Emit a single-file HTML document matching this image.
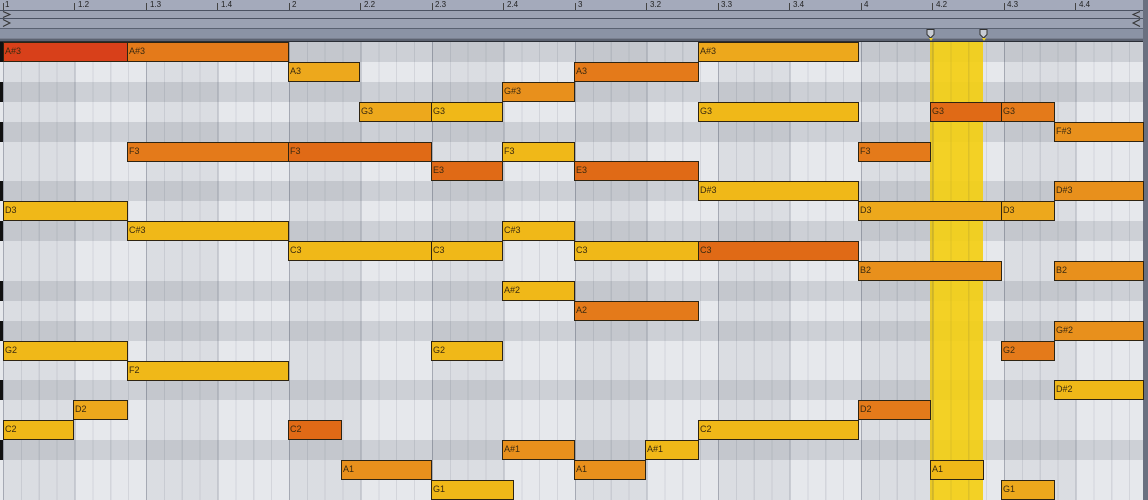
<!DOCTYPE html>
<html><head><meta charset="utf-8"><style>
*{margin:0;padding:0;box-sizing:border-box}
body{width:1148px;height:500px;overflow:hidden;background:#e6e8ec;position:relative;font-family:"Liberation Sans",sans-serif}
.r{position:absolute;left:0;width:1143px;height:20px;background:#e6e8ec}
.d{background:#cdd0d6}
.d::before{content:"";position:absolute;left:0;top:0;width:3px;height:100%;background:#111}
#ov{position:absolute;left:0;top:42px;width:1143px;height:458px;
background:
repeating-linear-gradient(90deg,rgba(40,50,70,.10) 0 1px,transparent 1px 17.875px),
repeating-linear-gradient(90deg,rgba(40,50,70,.22) 0 1px,transparent 1px 71.5px),
repeating-linear-gradient(90deg,rgba(30,40,60,.055) 0 71.5px,transparent 71.5px 143px);
background-position:3px 0,3px 0,3px 0}
#hl{position:absolute;left:930px;top:42px;width:53px;height:458px;background:rgba(244,206,16,.9)}
.n{position:absolute;height:20px;border:1.5px solid #2e2412;font-size:9px;line-height:17px;padding-left:1px;color:#3a2a10;white-space:nowrap;overflow:hidden}
.y{background:#f0b818}.o{background:#e8901c}.oo{background:#e47a1a}.do{background:#e06a16}.rd{background:#d8401a}.yo{background:#eda81c}
#ruler{position:absolute;left:0;top:0;width:1148px;height:42px;background:#a4aabb}
.s{position:absolute;left:0;width:1143px}
.lab{position:absolute;top:0;font-size:8px;color:#222;line-height:10px}
.tk{position:absolute;top:3px;width:1px;height:7px;background:#444}
</style></head><body>
<div class="r d" style="top:42px"></div>
<div class="r" style="top:62px"></div>
<div class="r d" style="top:82px"></div>
<div class="r" style="top:102px"></div>
<div class="r d" style="top:122px"></div>
<div class="r" style="top:142px"></div>
<div class="r" style="top:161px"></div>
<div class="r d" style="top:181px"></div>
<div class="r" style="top:201px"></div>
<div class="r d" style="top:221px"></div>
<div class="r" style="top:241px"></div>
<div class="r" style="top:261px"></div>
<div class="r d" style="top:281px"></div>
<div class="r" style="top:301px"></div>
<div class="r d" style="top:321px"></div>
<div class="r" style="top:341px"></div>
<div class="r" style="top:361px"></div>
<div class="r d" style="top:380px"></div>
<div class="r" style="top:400px"></div>
<div class="r" style="top:420px"></div>
<div class="r d" style="top:440px"></div>
<div class="r" style="top:460px"></div>
<div class="r" style="top:480px"></div>
<div id="hl"></div>
<div id="ov"></div>
<div style="position:absolute;left:1143px;top:0;width:5px;height:500px;background:#6a7080"></div>

<div class="n rd" style="left:3px;width:125px;top:42px">A#3</div>
<div class="n oo" style="left:127px;width:162px;top:42px">A#3</div>
<div class="n yo" style="left:698px;width:161px;top:42px">A#3</div>
<div class="n yo" style="left:288px;width:72px;top:62px">A3</div>
<div class="n oo" style="left:574px;width:125px;top:62px">A3</div>
<div class="n o" style="left:502px;width:73px;top:82px">G#3</div>
<div class="n yo" style="left:359px;width:73px;top:102px">G3</div>
<div class="n y" style="left:431px;width:72px;top:102px">G3</div>
<div class="n y" style="left:698px;width:161px;top:102px">G3</div>
<div class="n do" style="left:930px;width:72px;top:102px">G3</div>
<div class="n oo" style="left:1001px;width:54px;top:102px">G3</div>
<div class="n o" style="left:1054px;width:90px;top:122px">F#3</div>
<div class="n oo" style="left:127px;width:162px;top:142px">F3</div>
<div class="n do" style="left:288px;width:144px;top:142px">F3</div>
<div class="n y" style="left:502px;width:73px;top:142px">F3</div>
<div class="n oo" style="left:858px;width:73px;top:142px">F3</div>
<div class="n do" style="left:431px;width:72px;top:161px">E3</div>
<div class="n do" style="left:574px;width:125px;top:161px">E3</div>
<div class="n y" style="left:698px;width:161px;top:181px">D#3</div>
<div class="n o" style="left:1054px;width:90px;top:181px">D#3</div>
<div class="n y" style="left:3px;width:125px;top:201px">D3</div>
<div class="n yo" style="left:858px;width:144px;top:201px">D3</div>
<div class="n yo" style="left:1001px;width:54px;top:201px">D3</div>
<div class="n y" style="left:127px;width:162px;top:221px">C#3</div>
<div class="n y" style="left:502px;width:73px;top:221px">C#3</div>
<div class="n y" style="left:288px;width:144px;top:241px">C3</div>
<div class="n y" style="left:431px;width:72px;top:241px">C3</div>
<div class="n y" style="left:574px;width:125px;top:241px">C3</div>
<div class="n do" style="left:698px;width:161px;top:241px">C3</div>
<div class="n o" style="left:858px;width:144px;top:261px">B2</div>
<div class="n o" style="left:1054px;width:90px;top:261px">B2</div>
<div class="n y" style="left:502px;width:73px;top:281px">A#2</div>
<div class="n oo" style="left:574px;width:125px;top:301px">A2</div>
<div class="n o" style="left:1054px;width:90px;top:321px">G#2</div>
<div class="n y" style="left:3px;width:125px;top:341px">G2</div>
<div class="n y" style="left:431px;width:72px;top:341px">G2</div>
<div class="n oo" style="left:1001px;width:54px;top:341px">G2</div>
<div class="n y" style="left:127px;width:162px;top:361px">F2</div>
<div class="n y" style="left:1054px;width:90px;top:380px">D#2</div>
<div class="n yo" style="left:73px;width:55px;top:400px">D2</div>
<div class="n oo" style="left:858px;width:73px;top:400px">D2</div>
<div class="n y" style="left:3px;width:71px;top:420px">C2</div>
<div class="n do" style="left:288px;width:54px;top:420px">C2</div>
<div class="n y" style="left:698px;width:161px;top:420px">C2</div>
<div class="n o" style="left:502px;width:73px;top:440px">A#1</div>
<div class="n y" style="left:645px;width:54px;top:440px">A#1</div>
<div class="n o" style="left:341px;width:91px;top:460px">A1</div>
<div class="n o" style="left:574px;width:72px;top:460px">A1</div>
<div class="n y" style="left:930px;width:54px;top:460px">A1</div>
<div class="n y" style="left:431px;width:83px;top:480px">G1</div>
<div class="n yo" style="left:1001px;width:54px;top:480px">G1</div>

<div id="ruler">
<div class="s" style="top:10px;height:9px;background:#9ba2b3;border-top:1px solid #4a5262"></div>
<div class="s" style="top:18px;height:10px;background:#9ba2b3;border-top:1px solid #4a5262"></div>
<div class="s" style="top:28px;height:10px;background:#8b93a5;border-top:1px solid #5a6272"></div>
<div class="s" style="top:38px;height:4px;background:#5c6270;border-top:1px solid #7a8090;border-bottom:1px solid #2a2e36"></div>
<div style="position:absolute;left:1143px;top:0;width:5px;height:42px;background:#6a7080"></div>
<svg style="position:absolute;left:0;top:0" width="1148" height="42">
<polyline points="3,11.5 10,14.5 3,17.5" fill="none" stroke="#333" stroke-width="1"/>
<polyline points="3,19.5 10,23 3,26.5" fill="none" stroke="#333" stroke-width="1"/>
<polyline points="1140,11.5 1133,14.5 1140,17.5" fill="none" stroke="#333" stroke-width="1"/>
<polyline points="1140,19.5 1133,23 1140,26.5" fill="none" stroke="#333" stroke-width="1"/>
<path d="M927,29.5 h7 v5 l-3.5,3.5 l-3.5,-3.5 z" fill="#c8ccd4" stroke="#333" stroke-width="1"/>
<path d="M980,29.5 h7 v5 l-3.5,3.5 l-3.5,-3.5 z" fill="#c8ccd4" stroke="#333" stroke-width="1"/>
<path d="M929,38 h4 l-2,3 z M982,38 h4 l-2,3 z" fill="#f0d020"/>
</svg>
<div class="tk" style="left:3px"></div><div class="lab" style="left:5px">1</div>
<div class="tk" style="left:74px"></div><div class="lab" style="left:78px">1.2</div>
<div class="tk" style="left:146px"></div><div class="lab" style="left:150px">1.3</div>
<div class="tk" style="left:217px"></div><div class="lab" style="left:221px">1.4</div>
<div class="tk" style="left:289px"></div><div class="lab" style="left:292px">2</div>
<div class="tk" style="left:360px"></div><div class="lab" style="left:364px">2.2</div>
<div class="tk" style="left:432px"></div><div class="lab" style="left:435px">2.3</div>
<div class="tk" style="left:503px"></div><div class="lab" style="left:507px">2.4</div>
<div class="tk" style="left:575px"></div><div class="lab" style="left:578px">3</div>
<div class="tk" style="left:646px"></div><div class="lab" style="left:650px">3.2</div>
<div class="tk" style="left:718px"></div><div class="lab" style="left:721px">3.3</div>
<div class="tk" style="left:789px"></div><div class="lab" style="left:793px">3.4</div>
<div class="tk" style="left:861px"></div><div class="lab" style="left:864px">4</div>
<div class="tk" style="left:932px"></div><div class="lab" style="left:936px">4.2</div>
<div class="tk" style="left:1004px"></div><div class="lab" style="left:1007px">4.3</div>
<div class="tk" style="left:1075px"></div><div class="lab" style="left:1079px">4.4</div>
</div>
</body></html>
